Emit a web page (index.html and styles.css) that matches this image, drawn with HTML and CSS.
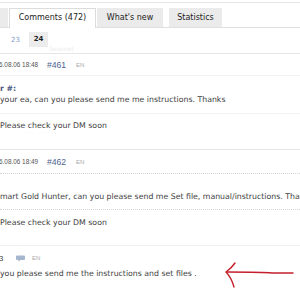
FILE: index.html
```html
<!DOCTYPE html>
<html>
<head>
<meta charset="utf-8">
<link rel="stylesheet" href="styles.css">
</head>
<body>
<div class="page">
  <div class="tabs">
    <div class="tab stub"></div>
    <div class="tab active">Comments (472)</div>
    <div class="tab wn">What's new</div>
    <div class="tab st">Statistics</div>
  </div>
  <div class="pager">
    <span class="pg">23</span>
    <span class="pg cur">24</span>
  </div>
  <div class="faint f1">&middot; &middot; &middot; &middot; &middot;&nbsp;&nbsp;Sevenet</div>

  <div class="comment c1">
    <div class="head">
      <span class="date">6.08.06 18:48</span>
      <span class="num">#461</span>
      <span class="lang">EN</span>
    </div>
    <div class="body b1">
      <div class="qt">r #:</div>
      <div class="txt">your ea, can you please send me me instructions. Thanks</div>
    </div>
    <div class="reply r1">
      <div class="txt">Please check your DM soon</div>
      <div class="faint f2">&middot; &middot; &middot; &middot; &nbsp;&nbsp;&middot; &middot; &middot;</div>
    </div>
  </div>

  <div class="comment c2">
    <div class="head h2">
      <span class="date">6.08.06 18:49</span>
      <span class="num">#462</span>
      <span class="lang">EN</span>
    </div>
    <div class="body b2">
      <div class="txt">mart Gold Hunter, can you please send me Set file, manual/instructions. Thanks</div>
    </div>
    <div class="reply r2">
      <div class="txt">Please check your DM soon</div>
    </div>
  </div>

  <div class="comment c3">
    <div class="head h3">
      <span class="date n3">3</span>
      <svg class="bubble" width="9" height="7" viewBox="0 0 9 7"><path d="M1 0.5h7a1 1 0 0 1 1 1v2.5a1 1 0 0 1-1 1H4.5L2.5 6.8V5H1a1 1 0 0 1-1-1V1.5a1 1 0 0 1 1-1z" fill="#a7b6cf"/></svg>
      <span class="lang">EN</span>
    </div>
    <div class="txt b3">you please send me the instructions and set files .</div>
  </div>
</div>
<svg class="arrow" width="80" height="34" viewBox="0 0 80 34">
  <path d="M11 2 C9 5 6 8 2 11 C5 14 8 19 10 26" fill="none" stroke="#c41f2c" stroke-width="1.4" stroke-linecap="round"/>
  <path d="M3 11 C20 11 40 11 48 12 C55 12 62 12 69 12" fill="none" stroke="#c41f2c" stroke-width="1.4" stroke-linecap="round"/>
</svg>
</body>
</html>
```
FILE: styles.css
```css
html, body {
  margin: 0;
  padding: 0;
  background: #fff;
}
body {
  width: 300px;
  height: 290px;
  overflow: hidden;
  position: relative;
  font-family: "DejaVu Sans", sans-serif;
  color: #444;
}
.page {
  width: 300px;
}
.tabs {
  margin-top: 2px;
  border-top: 1px solid #e6e6e6;
  padding-top: 5px;
  display: flex;
  align-items: flex-end;
  border-bottom: 1px solid #e0e0e0;
  height: 19px;
}
.tab {
  height: 19px;
  box-sizing: border-box;
  background: #ebebeb;
  font-size: 8px;
  line-height: 19px;
  color: #222;
  text-align: center;
}
.stub {
  width: 8px;
  margin-right: 1px;
}
.active {
  width: 87px;
  background: #fff;
  border: 1px solid #dcdcdc;
  border-bottom: none;
  height: 20px;
  margin-bottom: -1px;
  line-height: 18px;
}
.wn {
  width: 66px;
  margin-left: 1px;
}
.st {
  width: 53px;
  margin-left: 6px;
}
.pager {
  display: flex;
  align-items: center;
  padding-top: 4px;
  height: 15px;
  padding-left: 11px;
  font-size: 7px;
}
.pg {
  color: #7e9ec9;
  width: 12px;
}
.cur {
  color: #222;
  font-weight: bold;
  background: #ececec;
  width: 19px;
  height: 15px;
  line-height: 15px;
  text-align: center;
  margin-left: 6px;
}
.faint {
  color: #ececec;
  font-size: 6px;
}
.f1 {
  height: 6px;
  line-height: 4px;
  padding-left: 28px;
  overflow: visible;
}
.comment {
  border-top: 1px solid #e6e6e6;
}
.head {
  display: flex;
  align-items: center;
  height: 21px;
  border-bottom: 1px solid #f3f3f3;
  font-family: "Liberation Sans", sans-serif;
}
.date {
  font-size: 6.4px;
  color: #555;
  margin-left: -1px;
  width: 48px;
}
.num {
  font-size: 8.6px;
  color: #4e5f8e;
  width: 29px;
}
.lang {
  font-size: 6px;
  color: #aaa;
}
.txt {
  font-size: 7.8px;
  line-height: 11px;
  white-space: nowrap;
  color: #3e3e3e;
}
.qt {
  font-size: 7.8px;
  line-height: 11px;
  color: #4a5680;
  font-weight: bold;
}
.b1 {
  padding-top: 7px;
  padding-bottom: 8px;
  border-bottom: 1px solid #f3f3f3;
}
.r1 {
  padding-top: 6px;
  height: 29px;
}
.f2 {
  padding-left: 20px;
  line-height: 4px;
}
.c2 .h2 {
  height: 23px;
  border-bottom: 1px dotted #d4d4d4;
}
.b2 {
  padding-top: 17px;
  padding-bottom: 7px;
  border-bottom: 1px dotted #d4d4d4;
  overflow: hidden;
}
.r2 {
  padding-top: 7px;
  height: 28px;
}
.c3 {
  border-top: 1px solid #efefef;
}
.h3 {
  height: 12px;
  margin-top: 6px;
  border-bottom: none;
}
.n3 {
  font-size: 7.8px;
  color: #444;
  width: 17px;
  margin-left: -1px;
}
.bubble {
  margin-right: 7px;
}
.b3 {
  margin-top: 4px;
}
.arrow {
  position: absolute;
  left: 224px;
  top: 261px;
}
```
